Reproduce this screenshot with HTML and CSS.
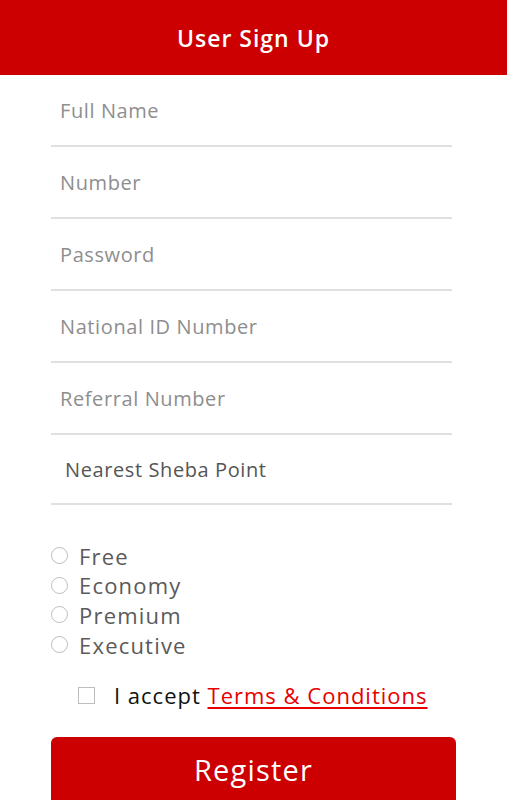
FILE: index.html
```html
<!DOCTYPE html>
<html lang="en">
<head>
    <meta charset="UTF-8">
    <meta name="viewport" content="width=device-width, initial-scale=1.0">
    <title>User Sign Up</title>
    <link rel="stylesheet" href="styles.css">
</head>
<body>
    <header class="top-bar">
        <h1>User Sign Up</h1>
    </header>

    <form class="signup-form">
        <div class="field"><input type="text" placeholder="Full Name"></div>
        <div class="field"><input type="text" placeholder="Number"></div>
        <div class="field"><input type="password" placeholder="Password"></div>
        <div class="field"><input type="text" placeholder="National ID Number"></div>
        <div class="field"><input type="text" placeholder="Referral Number"></div>
        <div class="field select-field"><span>Nearest Sheba Point</span></div>

        <div class="plans">
            <label class="plan"><input type="radio" name="plan"><span class="radio"></span>Free</label>
            <label class="plan"><input type="radio" name="plan"><span class="radio"></span>Economy</label>
            <label class="plan"><input type="radio" name="plan"><span class="radio"></span>Premium</label>
            <label class="plan"><input type="radio" name="plan"><span class="radio"></span>Executive</label>
        </div>

        <label class="terms">
            <input type="checkbox"><span class="box"></span>
            I accept&nbsp;<a href="#">Terms &amp; Conditions</a>
        </label>

        <button type="button">Register</button>
    </form>
</body>
</html>
```

FILE: styles.css
```css
body {
    margin: 0;
    background-color: #ffffff;
    font-family: "Open Sans", "DejaVu Sans", sans-serif;
    overflow: hidden;
}

.top-bar {
    background-color: #cc0000;
    height: 75px;
    display: flex;
    align-items: center;
    justify-content: center;
}

.top-bar h1 {
    margin: 0;
    color: #ffffff;
    font-size: 23px;
    font-weight: 600;
    letter-spacing: 1px;
}

.signup-form {
    padding: 0 51px 0 51px;
}

.field {
    height: 70px;
    margin-right: 4px;
    border-bottom: 2px solid #e0e0e0;
    display: flex;
    align-items: center;
}

.field input {
    border: none;
    outline: none;
    width: 100%;
    padding: 0 9px;
    font-family: inherit;
    font-size: 20px;
    letter-spacing: 0.6px;
    color: #333333;
    background: transparent;
}

.field input::placeholder {
    color: #8e8e8e;
}

.select-field {
    height: 68px;
}

.select-field span {
    padding-left: 14px;
    font-size: 20px;
    letter-spacing: 0.6px;
    color: #555555;
}

.plans {
    margin-top: 36px;
    display: flex;
    flex-direction: column;
}

.plan {
    height: 29.6px;
    display: flex;
    align-items: center;
    font-size: 22px;
    letter-spacing: 1.2px;
    color: #5a5a5a;
    cursor: pointer;
}

.plan input,
.terms input {
    display: none;
}

.radio {
    width: 15px;
    height: 15px;
    border: 1.5px solid #bdbdbd;
    border-radius: 50%;
    margin-right: 11px;
}

.terms {
    margin-top: 21px;
    height: 30px;
    padding-left: 27px;
    display: flex;
    align-items: center;
    font-size: 22px;
    letter-spacing: 1px;
    color: #111111;
    cursor: pointer;
}

.box {
    width: 15px;
    height: 15px;
    border: 1.5px solid #bdbdbd;
    margin-right: 19px;
}

.terms a {
    color: #e60000;
    text-decoration: underline;
    text-underline-offset: 3px;
}

button {
    display: block;
    width: 405px;
    height: 70px;
    margin-top: 27px;
    border: none;
    border-radius: 6px;
    background-color: #cc0000;
    color: #ffffff;
    font-family: inherit;
    font-size: 29px;
    letter-spacing: 1.2px;
    padding-bottom: 6px;
    cursor: pointer;
}
```
